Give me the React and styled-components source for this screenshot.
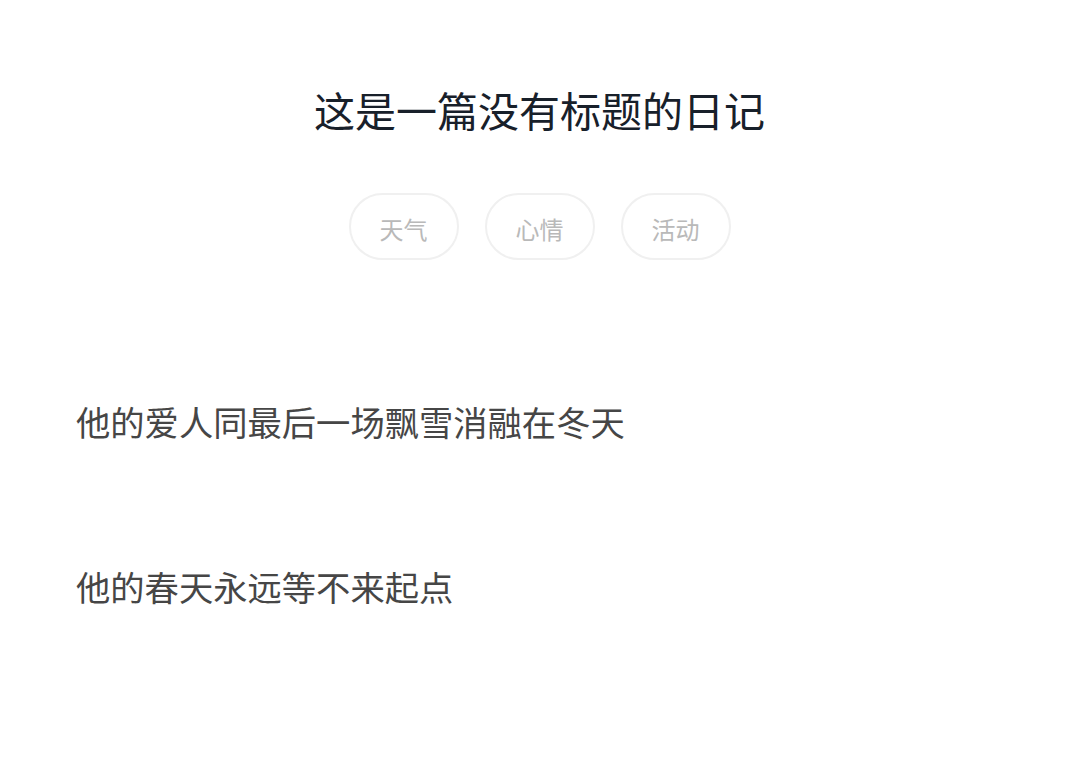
import React from "react";
import styled, { createGlobalStyle } from "styled-components";

const GlobalStyle = createGlobalStyle`
  html, body {
    margin: 0;
    padding: 0;
    background: #ffffff;
  }
  body {
    font-family: "Noto Sans CJK SC", "Noto Sans", sans-serif;
  }
`;

const Page = styled.main`
  min-height: 767px;
  display: flex;
  flex-direction: column;
  padding-top: 79px;
  box-sizing: border-box;
`;

const Title = styled.h1`
  margin: 0;
  text-align: center;
  font-size: 41px;
  line-height: 60px;
  font-weight: 400;
  color: #18202a;
`;

const TagRow = styled.div`
  display: flex;
  justify-content: center;
  gap: 26px;
  margin-top: 54px;
`;

const Tag = styled.button`
  height: 67px;
  padding: 5px 29px 0;
  border: 2px solid #f0f0f0;
  border-radius: 34px;
  background: #ffffff;
  color: #b9b9b9;
  font-family: inherit;
  font-size: 24px;
  line-height: 1;
  box-sizing: border-box;
`;

const Body = styled.section`
  display: flex;
  flex-direction: column;
  gap: 115px;
  margin-top: 136px;
  padding: 0 76px;
`;

const Paragraph = styled.p`
  margin: 0;
  font-size: 34.3px;
  line-height: 50px;
  color: #464646;
`;

const tags = ["天气", "心情", "活动"];
const lines = ["他的爱人同最后一场飘雪消融在冬天", "他的春天永远等不来起点"];

export default function App() {
  return (
    <>
      <GlobalStyle />
      <Page>
        <Title>这是一篇没有标题的日记</Title>
        <TagRow>
          {tags.map((t) => (
            <Tag key={t}>{t}</Tag>
          ))}
        </TagRow>
        <Body>
          {lines.map((l) => (
            <Paragraph key={l}>{l}</Paragraph>
          ))}
        </Body>
      </Page>
    </>
  );
}
